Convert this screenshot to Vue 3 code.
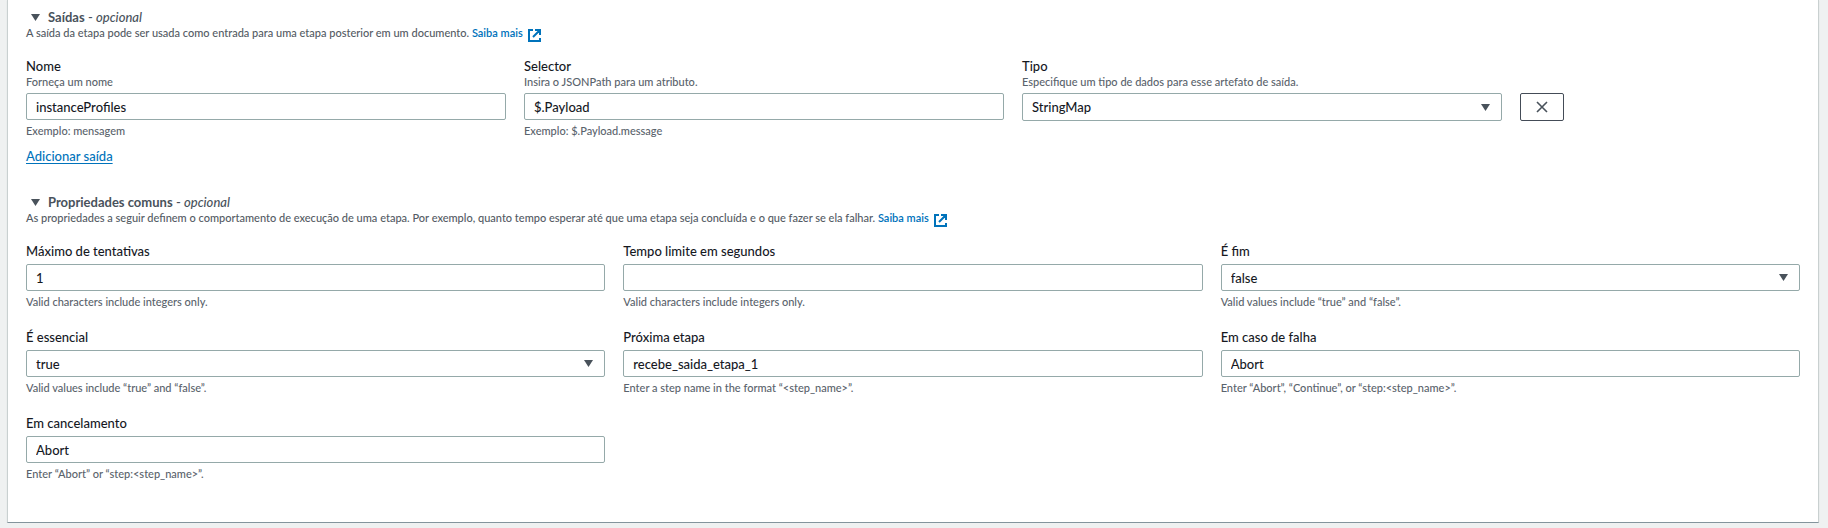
<script setup>
import { reactive, ref } from 'vue'

const outputsOpen = ref(true)
const commonOpen = ref(true)

const output = reactive({ name: 'instanceProfiles', selector: '$.Payload', type: 'StringMap' })
const types = ['StringMap', 'String', 'Integer', 'Boolean', 'StringList', 'MapList']

const fields = reactive([
  { id: 'max-attempts', label: 'Máximo de tentativas', value: '1', hint: 'Valid characters include integers only.' },
  { id: 'timeout', label: 'Tempo limite em segundos', value: '', hint: 'Valid characters include integers only.' },
  { id: 'is-end', label: 'É fim', value: 'false', options: ['true', 'false'], hint: 'Valid values include “true” and “false”.' },
  { id: 'is-critical', label: 'É essencial', value: 'true', options: ['true', 'false'], hint: 'Valid values include “true” and “false”.' },
  { id: 'next-step', label: 'Próxima etapa', value: 'recebe_saida_etapa_1', hint: 'Enter a step name in the format “<step_name>”.' },
  { id: 'on-failure', label: 'Em caso de falha', value: 'Abort', hint: 'Enter “Abort”, “Continue”, or “step:<step_name>”.' },
  { id: 'on-cancel', label: 'Em cancelamento', value: 'Abort', hint: 'Enter “Abort” or “step:<step_name>”.' }
])
</script>

<template>
  <main class="panel">
    <section class="section">
      <h2 class="heading">
        <button type="button" class="toggle" :aria-expanded="outputsOpen" @click="outputsOpen = !outputsOpen">
          <svg class="caret" viewBox="0 0 9 7" aria-hidden="true"><path d="M0 0h9L4.5 7z" /></svg>
          <span><b>Saídas</b> - <i>opcional</i></span>
        </button>
      </h2>
      <p class="description">
        A saída da etapa pode ser usada como entrada para uma etapa posterior em um documento.
        <a href="#saidas" class="link">Saiba mais<svg class="external" viewBox="0 0 13 13" aria-hidden="true"><path d="M5 1H1v11h11V9M7 1h5v5M12 1 5 8" /></svg></a>
      </p>
      <div v-if="outputsOpen">
        <div class="output-row">
          <div class="field">
            <label for="output-name" class="label">Nome</label>
            <span class="hint">Forneça um nome</span>
            <input id="output-name" v-model="output.name" class="control" type="text" />
            <span class="hint after">Exemplo: mensagem</span>
          </div>
          <div class="field">
            <label for="output-selector" class="label">Selector</label>
            <span class="hint">Insira o JSONPath para um atributo.</span>
            <input id="output-selector" v-model="output.selector" class="control" type="text" />
            <span class="hint after">Exemplo: $.Payload.message</span>
          </div>
          <div class="field">
            <label for="output-type" class="label">Tipo</label>
            <span class="hint">Especifique um tipo de dados para esse artefato de saída.</span>
            <div class="select">
              <select id="output-type" v-model="output.type" class="control tall">
                <option v-for="t in types" :key="t">{{ t }}</option>
              </select>
              <svg class="caret" viewBox="0 0 9 7" aria-hidden="true"><path d="M0 0h9L4.5 7z" /></svg>
            </div>
          </div>
          <div class="remove-cell">
            <button type="button" class="remove" aria-label="Remover saída">
              <svg viewBox="0 0 12 12" aria-hidden="true"><path d="M1 1l10 10M11 1 1 11" /></svg>
            </button>
          </div>
        </div>
        <a href="#adicionar" class="add">Adicionar saída</a>
      </div>
    </section>

    <section class="section">
      <h2 class="heading">
        <button type="button" class="toggle" :aria-expanded="commonOpen" @click="commonOpen = !commonOpen">
          <svg class="caret" viewBox="0 0 9 7" aria-hidden="true"><path d="M0 0h9L4.5 7z" /></svg>
          <span><b>Propriedades comuns</b> - <i>opcional</i></span>
        </button>
      </h2>
      <p class="description">
        As propriedades a seguir definem o comportamento de execução de uma etapa. Por exemplo, quanto tempo esperar até que uma etapa seja concluída e o que fazer se ela falhar.
        <a href="#propriedades" class="link">Saiba mais<svg class="external" viewBox="0 0 13 13" aria-hidden="true"><path d="M5 1H1v11h11V9M7 1h5v5M12 1 5 8" /></svg></a>
      </p>
      <div v-if="commonOpen" class="grid">
        <div v-for="f in fields" :key="f.id" class="field">
          <label :for="f.id" class="label">{{ f.label }}</label>
          <div v-if="f.options" class="select">
            <select :id="f.id" v-model="f.value" class="control">
              <option v-for="o in f.options" :key="o">{{ o }}</option>
            </select>
            <svg class="caret" viewBox="0 0 9 7" aria-hidden="true"><path d="M0 0h9L4.5 7z" /></svg>
          </div>
          <input v-else :id="f.id" v-model="f.value" class="control" type="text" />
          <span class="hint after">{{ f.hint }}</span>
        </div>
      </div>
    </section>
  </main>
</template>

<style>
body {
  background: #eff1f1;
}
</style>

<style scoped>
.panel {
  margin: 0 9px 0 7px;
  padding: 8px 18px 41px;
  background: #fff;
  border: solid #c9d0d0;
  border-width: 0 1px;
  border-bottom: 1px solid #84949c;
  box-shadow: 0 1px 1px #d5dada;
  font-family: Lato, "Noto Sans", sans-serif;
  font-size: 13px;
  font-weight: 500;
  line-height: 18px;
  color: #16191f;
}

.section + .section {
  margin-top: 28px;
}

.heading {
  margin: 0;
  font-size: 13px;
  font-weight: 500;
  line-height: 18px;
}

.toggle {
  display: flex;
  align-items: center;
  gap: 8px;
  padding: 0 0 0 5px;
  border: 0;
  background: none;
  font: inherit;
  color: #49525b;
  cursor: pointer;
}

.caret {
  display: block;
  width: 9px;
  height: 7px;
  fill: #49525b;
}

.description {
  margin: 0 0 17px;
  font-size: 11px;
  line-height: 14px;
  color: #545b64;
}

.link {
  display: inline-flex;
  height: 14px;
  gap: 5px;
  color: #0073bb;
  font-weight: 600;
  text-decoration: none;
}

.external {
  width: 13px;
  height: 13px;
  margin-top: 3px;
  fill: none;
  stroke: #0073bb;
  stroke-width: 2;
}

.output-row {
  display: grid;
  grid-template-columns: 12fr 12fr 12fr 7fr;
  column-gap: 18px;
  margin-bottom: 9px;
}

.grid {
  display: grid;
  grid-template-columns: repeat(3, 1fr);
  gap: 19px 18px;
}

.field {
  display: flex;
  flex-direction: column;
  min-width: 0;
}

.label {
  line-height: 18px;
}

.hint {
  font-size: 11px;
  line-height: 14px;
  color: #5a636c;
}

.after {
  margin-top: 4px;
}

.control {
  box-sizing: border-box;
  display: block;
  width: 100%;
  height: 27px;
  margin: 4px 0 0;
  padding: 0 9px;
  border: 1px solid #95a9a9;
  border-radius: 2px;
  background: #fff;
  font: inherit;
  color: #16191f;
  appearance: none;
}

.tall {
  height: 28px;
}

.select {
  position: relative;
}

.select .caret {
  position: absolute;
  right: 12px;
  bottom: 10px;
  pointer-events: none;
}

.remove-cell {
  padding-top: 36px;
}

.remove {
  display: flex;
  align-items: center;
  justify-content: center;
  width: 44px;
  height: 28px;
  padding: 0;
  border: 1px solid #444c57;
  border-radius: 2px;
  background: #fff;
  cursor: pointer;
}

.remove svg {
  width: 12px;
  height: 12px;
  stroke: #49525b;
  stroke-width: 1.6;
}

.add {
  display: inline-block;
  vertical-align: top;
  color: #0073bb;
  text-decoration: underline;
  text-underline-offset: 2px;
}
</style>
